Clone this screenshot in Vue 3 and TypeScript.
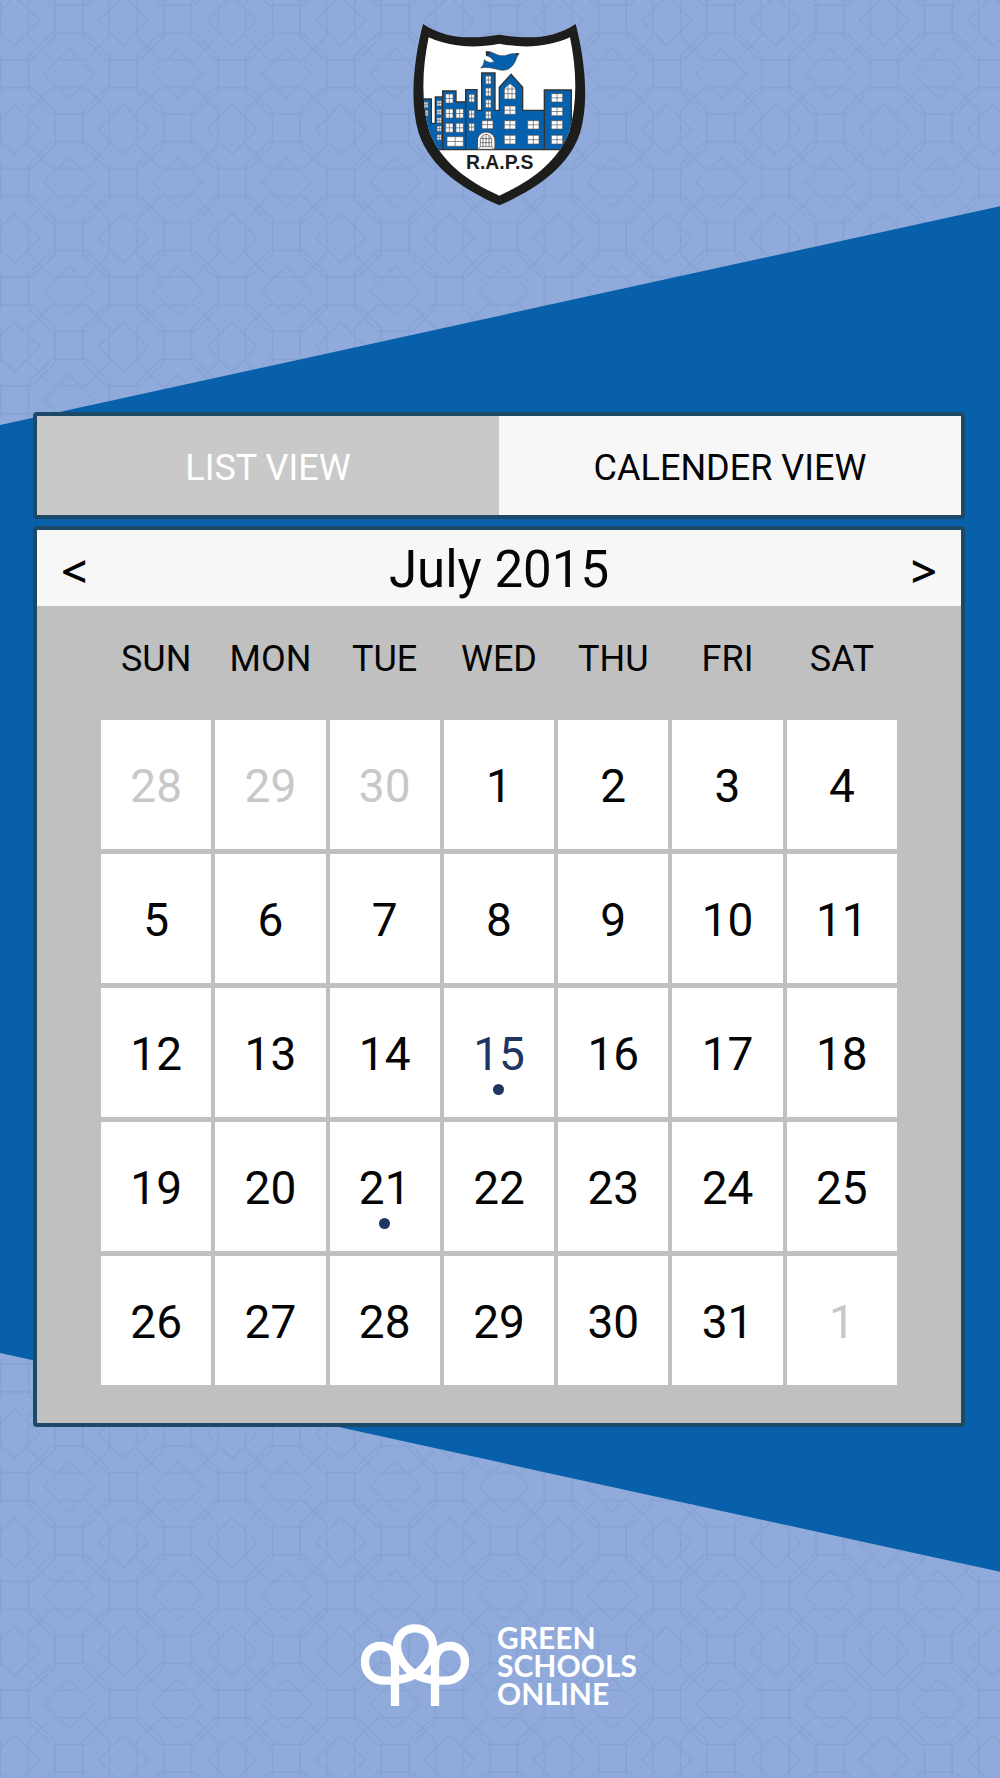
<script setup lang="ts">
import { ref } from 'vue'

interface Day {
  label: number
  outside?: boolean
  event?: boolean
}

type View = 'list' | 'calendar'

const view = ref<View>('calendar')
const weekdays = ['SUN', 'MON', 'TUE', 'WED', 'THU', 'FRI', 'SAT']
const eventDays = [15, 21]

const days: Day[] = [
  ...[28, 29, 30].map((label) => ({ label, outside: true })),
  ...Array.from({ length: 31 }, (_, i) => ({ label: i + 1, event: eventDays.includes(i + 1) })),
  { label: 1, outside: true },
]
const weeks: Day[][] = Array.from({ length: 5 }, (_, w) => days.slice(w * 7, w * 7 + 7))

// Crest windows: x, y, width, height
const windows: number[][] = [
  [72, 277, 12, 17], [72, 302, 12, 17],
  [111, 273, 13, 16], [111, 299, 13, 16], [111, 324, 13, 16], [111, 349, 13, 16], [111, 375, 13, 16],
  [137, 253, 22, 27], [137, 298, 22, 27], [168, 298, 22, 27], [137, 341, 22, 27], [168, 341, 22, 27],
  [141, 381, 49, 29],
  [207, 254, 16, 23], [207, 302, 16, 23], [207, 341, 16, 23],
  [257, 199, 16, 24], [257, 235, 16, 24], [257, 270, 16, 24], [257, 305, 16, 22],
  [246, 333, 33, 24],
  [313, 289, 34, 25], [313, 333, 34, 25], [313, 377, 34, 26],
  [383, 333, 34, 25], [383, 377, 34, 26],
  [454, 252, 34, 25], [454, 293, 34, 25], [454, 333, 34, 25], [454, 377, 34, 26],
]
const windowPath = (w: number[]) =>
  `M${w[0]} ${w[1]}h${w[2]}v${w[3]}h${-w[2]}zM${w[0] + w[2] / 2} ${w[1]}v${w[3]}M${w[0]} ${w[1] + w[3] / 2}h${w[2]}`
</script>

<template>
  <main class="page">
    <svg class="tiles" aria-hidden="true">
      <defs>
        <pattern id="tile" width="326" height="326" patternUnits="userSpaceOnUse" patternTransform="scale(0.3334)">
          <g fill="none" stroke="#86a2d2" stroke-width="4">
            <g v-for="dy in [-326, 0, 326]" :key="dy">
              <g v-for="dx in [-326, 0, 326]" :key="dx" :transform="`translate(${dx} ${dy})`">
                <path d="M165 16h83v84h-83z" />
                <path d="M328 179h84v84h-84z" />
                <path d="M207 146l75 75-75 74-75-74z" />
                <path d="M370 314l75 74-75 75-75-75z" />
                <path d="M155 -63h103l70 70v101l-70 71h-103l-70-71v-101z" />
                <path d="M155 100h103l70 69v103l-70 70h-103l-70-70v-103z" />
                <path d="M319 263h102l71 70v102l-71 70h-102l-71-70v-102z" />
              </g>
            </g>
          </g>
        </pattern>
      </defs>
      <rect width="100%" height="100%" fill="url(#tile)" />
    </svg>
    <div class="band"></div>

    <header class="crest">
      <svg viewBox="36 40 522 549" role="img" aria-label="R.A.P.S school crest">
        <defs>
          <clipPath id="shield">
            <path d="M86 83C150 112 222 117 298 102C374 117 446 112 510 83C528 170 535 270 508 365C475 455 395 515 298 558C201 515 121 455 88 365C61 270 68 170 86 83z" />
          </clipPath>
        </defs>
        <path fill="#1d1d1b" d="M69 43C140 90 215 88 298 75C381 88 456 90 527 43C552 140 570 270 540 370C505 475 405 540 298 587C191 540 91 475 56 370C26 270 44 140 69 43z" />
        <path fill="#fff" d="M86 83C150 112 222 117 298 102C374 117 446 112 510 83C528 170 535 270 508 365C475 455 395 515 298 558C201 515 121 455 88 365C61 270 68 170 86 83z" />
        <g clip-path="url(#shield)">
          <path fill="#0560ae" stroke="#333" stroke-width="4" d="M50 268H94V341H106V262H128V244H168V277H197V240H231V302H245V190H285V302H298V233L333 194L368 233V302H433V241H514V420H50z" />
          <path fill="none" stroke="#333" stroke-width="4" d="M128 262V420M197 277V420M433 302V420" />
          <path v-for="(w, i) in windows" :key="i" :d="windowPath(w)" fill="#fff" stroke="#555" stroke-width="2" />
          <path fill="#fff" stroke="#555" stroke-width="2" d="M313 268V237Q320 228 330 222Q341 228 347 237V268zM324 268V228M336 268V228M313 238H347M313 252H347" />
          <path fill="#fff" stroke="#444" stroke-width="3" d="M232 419V394C232 378 244 367 258 367C273 367 285 378 285 394V419z" />
          <path fill="none" stroke="#444" stroke-width="2" d="M241 411V389Q245 374 258 374Q271 374 275 389V411zM249 411V378M258 411V374M267 411V378M241 387H275M241 399H275M232 419L241 411M285 419L275 411" />
        </g>
        <path fill="#0560ae" stroke="#444" stroke-width="2" d="M258 126C275 123 285 136 302 138C318 141 328 131 341 132H357C349 140 350 151 341 163C331 178 318 184 301 181C283 177 263 170 242 175C250 168 252 160 253 150C262 159 273 160 283 156C277 149 270 139 259 138z" />
        <path fill="#333" d="M258 125L270 127L268 137L258 138zM345 131H358L352 138z" />
        <text class="crest-name" x="299" y="477" text-anchor="middle">R.A.P.S</text>
      </svg>
    </header>

    <div class="tabs" role="tablist">
      <button type="button" role="tab" class="tab tab-list" :aria-selected="view === 'list'" @click="view = 'list'">LIST VIEW</button>
      <button type="button" role="tab" class="tab tab-calendar" :aria-selected="view === 'calendar'" @click="view = 'calendar'">CALENDER VIEW</button>
    </div>

    <section class="calendar">
      <div class="month">
        <button type="button" class="step" aria-label="Previous month">&lt;</button>
        <h1 class="title">July 2015</h1>
        <button type="button" class="step" aria-label="Next month">&gt;</button>
      </div>
      <div class="sheet">
        <table class="grid">
          <thead>
            <tr>
              <th v-for="name in weekdays" :key="name" scope="col">{{ name }}</th>
            </tr>
          </thead>
          <tbody>
            <tr v-for="(week, w) in weeks" :key="w">
              <td v-for="(day, d) in week" :key="d" :class="{ outside: day.outside, event: day.event, today: day.event && day.label === 15 }">{{ day.label }}</td>
            </tr>
          </tbody>
        </table>
      </div>
    </section>

    <footer class="brand">
      <svg class="trees" viewBox="66 72 324 246" aria-hidden="true">
        <path fill="none" stroke="#fff" stroke-width="25" d="M168 318V190C168 155 150 138 123 138C97 138 78 158 78 185C78 222 105 242 140 242C190 242 225 232 250 205C272 182 282 160 282 138C282 106 258 85 228 85C198 85 174 106 174 138C174 160 184 182 206 205C231 232 266 242 316 242C351 242 378 222 378 185C378 158 359 138 333 138C306 138 288 155 288 190V318" />
      </svg>
      <p class="brand-name">GREEN<br />SCHOOLS<br />ONLINE</p>
    </footer>
  </main>
</template>

<style>
body {
  margin: 0;
}
</style>

<style scoped>
.page {
  position: relative;
  box-sizing: border-box;
  min-height: 100vh;
  display: flex;
  flex-direction: column;
  padding: 23px 35px 71px 33px;
  overflow: hidden;
  background: #8faadb;
  font-family: Roboto, "Liberation Sans", sans-serif;
  color: #050505;
  isolation: isolate;
}

.tiles,
.band {
  position: absolute;
  inset: 0;
  width: 100%;
  height: 100%;
  z-index: -1;
}

.band {
  background: #0860ab;
  clip-path: polygon(0 23.9%, 100% 11.6%, 100% 88.4%, 0 76.1%);
}

.crest {
  display: flex;
  justify-content: center;
  margin-bottom: 206px;
}

.crest svg {
  width: 174px;
  height: 183px;
}

.crest-name {
  font: bold 58px "Liberation Sans", Arial, sans-serif;
  fill: #1d1d1b;
}

.tabs,
.calendar {
  border: 4px solid #1c4966;
  border-radius: 4px;
}

.tabs {
  display: grid;
  grid-template-columns: 1fr 1fr;
  height: 99px;
  margin-bottom: 7px;
}

.tab,
.step {
  border: 0;
  padding: 0;
  font-family: inherit;
  cursor: pointer;
}

.tab {
  padding-top: 4px;
  font-size: 36px;
  line-height: 48px;
}

.tab-list {
  background: #c9c9c9;
  color: #fff;
}

.tab-calendar {
  background: #f7f7f7;
  color: #050505;
}

.month {
  display: flex;
  align-items: center;
  justify-content: space-between;
  box-sizing: border-box;
  height: 76px;
  padding: 4px 24px 0;
  background: #f7f7f7;
}

.title {
  margin: 0;
  font-size: 51px;
  font-weight: 400;
  line-height: 60px;
}

.step {
  background: none;
  color: #050505;
  font-family: "Open Sans", "Noto Sans", sans-serif;
  font-size: 46px;
  font-weight: 600;
  line-height: 60px;
}

.sheet {
  padding: 0 60px 33px;
  background: #c0c0c0;
}

.grid {
  width: 100%;
  table-layout: fixed;
  border-collapse: separate;
  border-spacing: 4px 5px;
}

.grid th {
  box-sizing: border-box;
  height: 104px;
  padding: 0 0 8px;
  font-size: 36px;
  font-weight: 400;
  line-height: 48px;
}

.grid td {
  position: relative;
  box-sizing: border-box;
  height: 129px;
  padding: 2px 0 0;
  background: #fff;
  font-size: 46px;
  line-height: 56px;
  text-align: center;
}

.grid .outside {
  color: #c8c8c8;
}

.grid .today {
  color: #1f3564;
}

.event::after {
  content: "";
  position: absolute;
  left: calc(50% - 6px);
  bottom: 22px;
  width: 11px;
  height: 11px;
  border-radius: 50%;
  background: #1f3564;
}

.brand {
  display: flex;
  align-items: center;
  justify-content: center;
  gap: 28px;
  margin-top: auto;
}

.trees {
  width: 108px;
  height: 82px;
}

.brand-name {
  margin: 0;
  font: 700 30px/28px Lato, "Open Sans", sans-serif;
  color: #fff;
}
</style>
